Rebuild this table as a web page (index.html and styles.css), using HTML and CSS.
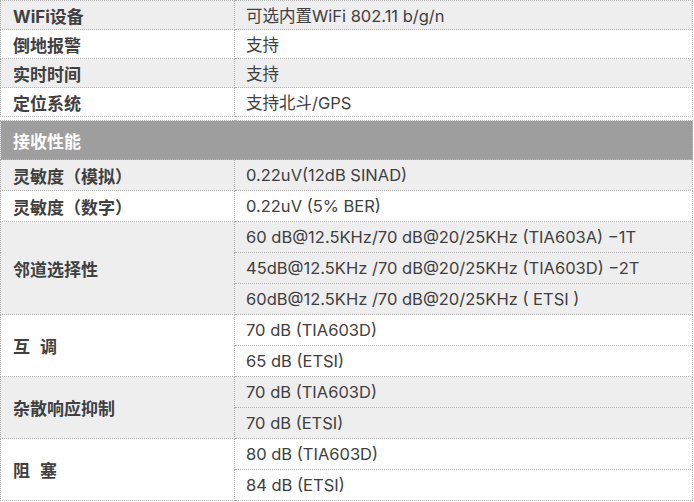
FILE: index.html
```html
<!DOCTYPE html>
<html lang="zh-CN">
<head>
<meta charset="utf-8">
<link rel="stylesheet" href="styles.css">
</head>
<body>
<table class="spec spec-top">
  <colgroup><col class="c1"><col class="c2"></colgroup>
  <tr class="g"><td class="k">WiFi设备</td><td>可选内置WiFi 802.11 b/g/n</td></tr>
  <tr><td class="k">倒地报警</td><td>支持</td></tr>
  <tr class="g"><td class="k">实时时间</td><td>支持</td></tr>
  <tr><td class="k">定位系统</td><td>支持北斗/GPS</td></tr>
</table>
<table class="spec spec-bottom">
  <colgroup><col class="c1"><col class="c2"></colgroup>
  <tr class="head"><td colspan="2">接收性能</td></tr>
  <tr class="g"><td class="k">灵敏度（模拟）</td><td>0.22uV(12dB SINAD)</td></tr>
  <tr><td class="k">灵敏度（数字）</td><td>0.22uV (5% BER)</td></tr>
  <tr class="g"><td class="k" rowspan="3">邻道选择性</td><td>60 dB@12.5KHz/70 dB@20/25KHz (TIA603A) −1T</td></tr>
  <tr class="g"><td>45dB@12.5KHz /70 dB@20/25KHz (TIA603D) −2T</td></tr>
  <tr class="g"><td>60dB@12.5KHz /70 dB@20/25KHz ( ETSI )</td></tr>
  <tr><td class="k" rowspan="2">互<span class="sp"> </span>调</td><td>70 dB (TIA603D)</td></tr>
  <tr><td>65 dB (ETSI)</td></tr>
  <tr class="g"><td class="k" rowspan="2">杂散响应抑制</td><td>70 dB (TIA603D)</td></tr>
  <tr class="g"><td>70 dB (ETSI)</td></tr>
  <tr><td class="k" rowspan="2">阻<span class="sp"> </span>塞</td><td>80 dB (TIA603D)</td></tr>
  <tr><td>84 dB (ETSI)</td></tr>
</table>
</body>
</html>
```
FILE: styles.css
```css
html, body {
  margin: 0;
  padding: 0;
  background: #fff;
}
body {
  font-family: Inter, "Noto Sans CJK SC", sans-serif;
  font-size: 16.5px;
  color: #404040;
}
.spec {
  border-collapse: collapse;
  width: 693px;
  table-layout: fixed;
}
.c1 { width: 234px; }
.spec td {
  border: 1px dotted #b4b4b4;
  padding: 0 0 0 11px;
  vertical-align: middle;
  white-space: nowrap;
}
.spec td.k {
  padding-left: 12px;
  font-weight: 700;
  font-size: 17px;
}
.sp {
  display: inline-block;
  width: 10px;
}
.spec-top tr { height: 29px; }
.spec-bottom { margin-top: 3px; }
.spec-bottom tr { height: 31px; }
.spec tr.g td { background: #eeeeee; }
.spec tr.head td {
  height: 38px;
  background: #9e9e9e;
  color: #fff;
  font-weight: 700;
  font-size: 17px;
  padding-left: 12px;
}
```
